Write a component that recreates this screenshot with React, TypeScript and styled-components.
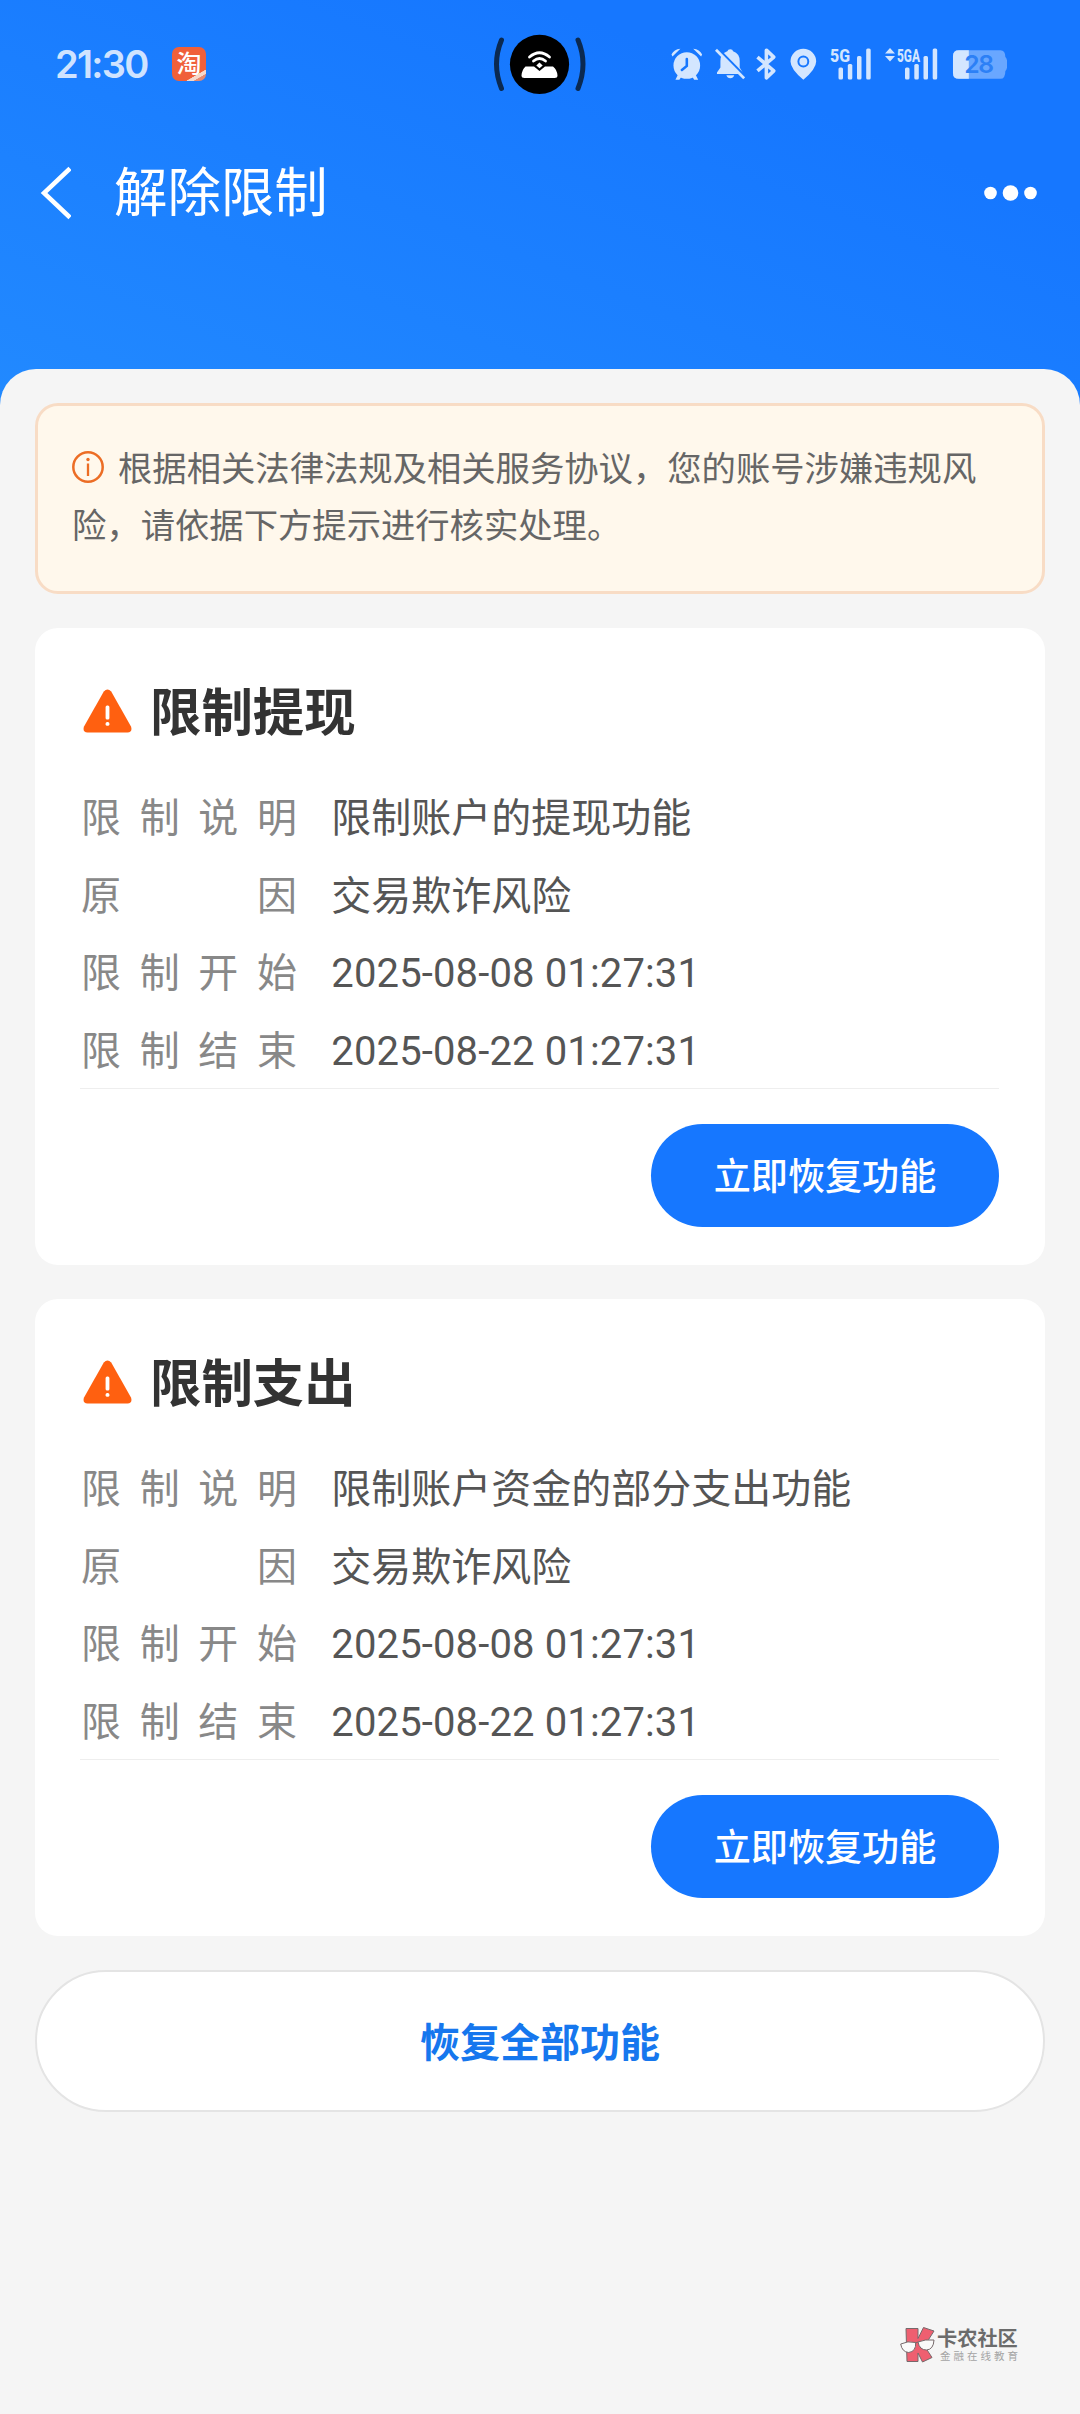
import React from "react";
import styled, { createGlobalStyle } from "styled-components";

const GlobalStyle = createGlobalStyle`
  * { box-sizing: border-box; }
  body { margin: 0; background: #f5f5f5; }
  button { font: inherit; cursor: pointer; }
`;

const Page = styled.div`
  width: 1080px;
  height: 2414px;
  display: flex;
  flex-direction: column;
  font-family: Roboto, "Noto Sans CJK SC", sans-serif;
  background: linear-gradient(to top right, #228aff, #1677ff 75%) 0 0 / 100% 420px no-repeat #f5f5f5;
`;

const StatusBar = styled.div`
  height: 128px;
  padding: 0 73px 0 55px;
  display: flex;
  align-items: center;
`;

const StatusLeft = styled.div`
  width: 438px;
  display: flex;
  align-items: center;
  gap: 24px;
`;

const Clock = styled.span`
  width: 93px;
  font: 600 38px/46px Inter, sans-serif;
  letter-spacing: -1.7px;
  white-space: nowrap;
  color: #cfe3ff;
`;

const AppBadge = styled.span`
  display: flex;
  align-items: center;
  justify-content: center;
  width: 34px;
  height: 34px;
  border-radius: 7px;
  padding-bottom: 4px;
  font: 500 25px/30px "Noto Sans CJK SC", sans-serif;
  color: #fff;
  background: linear-gradient(150deg, #f0603a 0 78%, #f5d9cc 79% 86%, #e58a72 87%);
`;

const StatusRight = styled.div`
  width: 336px;
  height: 32px;
  margin-left: auto;
  display: flex;
  color: #d3e6ff;
`;

const Signal = styled.div<{ $width: number; $left: number }>`
  width: ${(p) => p.$width}px;
  margin-left: ${(p) => p.$left}px;
  display: flex;
  svg { overflow: visible; }
`;

const NavBar = styled.header`
  height: 241px;
  padding: 24px 42px 0 40px;
  display: flex;
  align-items: flex-start;
`;

const Title = styled.h1`
  flex: 1;
  margin: 2px 0 0 43px;
  font-size: 53.4px;
  line-height: 80px;
  font-weight: 400;
  color: #fff;
`;

const Sheet = styled.main`
  flex: 1;
  padding: 34px 35px 0;
  border-radius: 36px 36px 0 0;
  background: #f5f5f5;
  display: flex;
  flex-direction: column;
`;

const Notice = styled.section`
  height: 191px;
  padding: 35px 32px 0 34px;
  border: 3px solid #f8dcc5;
  border-radius: 23px;
  background: #fff8ec;
  color: #666;
  font-size: 34.35px;
  line-height: 57.3px;
`;

const NoticeIcon = styled.svg`
  width: 32px;
  height: 32px;
  margin-right: 14px;
  vertical-align: -2px;
`;

const Card = styled.section`
  height: 637px;
  margin-top: 34px;
  padding: 51px 46px 0 45px;
  border-radius: 23px;
  background: #fff;
`;

const CardHead = styled.div`
  display: flex;
  align-items: center;
  height: 66px;
  gap: 18px;
  padding-left: 3px;
  > svg { margin-top: -2px; }
`;

const CardTitle = styled.h2`
  margin: 3px 0 0;
  font-size: 51.4px;
  line-height: 66px;
  font-weight: 700;
  color: #333;
`;

const Rows = styled.dl`
  margin: 35px 0 0;
  height: 309px;
  border-bottom: 1px solid #eee;
`;

const Row = styled.div`
  display: flex;
  height: 77.5px;
  gap: 34.3px;
  font-size: 40px;
  line-height: 77.5px;
`;

const Label = styled.dt`
  width: 217px;
  padding-left: 1px;
  color: #888;
  text-align: justify;
  text-align-last: justify;
`;

const Value = styled.dd<{ $numeric: boolean }>`
  margin: 0;
  color: #555;
  white-space: nowrap;
  letter-spacing: ${(p) => (p.$numeric ? "0.14px" : "0")};
`;

const CardFoot = styled.div`
  display: flex;
  justify-content: flex-end;
  padding-top: 35px;
`;

const RestoreButton = styled.button`
  width: 348px;
  height: 103px;
  padding: 0 0 4px;
  border: 0;
  border-radius: 52px;
  background: #1677ff;
  color: #fff;
  && { font-size: 37.1px; font-weight: 500; }
`;

const RestoreAll = styled.button`
  height: 142px;
  margin-top: 34px;
  padding: 0 0 3px;
  border: 2px solid #e4e4e4;
  border-radius: 71px;
  background: #fff;
  color: #1677ee;
  && { font-size: 40px; font-weight: 700; }
`;

const Watermark = styled.footer`
  margin: auto 24px 51px auto;
  display: flex;
  align-items: center;
  gap: 2px;
`;

const MarkText = styled.div`
  display: flex;
  flex-direction: column;
  font-family: "Noto Sans CJK SC", sans-serif;
`;

const MarkName = styled.span`
  font-size: 20.2px;
  line-height: 22px;
  font-weight: 700;
  color: #6b6b6b;
`;

const MarkSub = styled.span`
  padding-left: 3px;
  font-size: 10.5px;
  line-height: 14px;
  letter-spacing: 3px;
  color: #a4a4a4;
`;

const Camera = () => (
  <svg width="94" height="64" viewBox="0 0 94 64">
    <g fill="none" stroke="#0b2950" strokeWidth="5" strokeLinecap="round">
      <path d="M8.5 8Q-1.500 32 8.500 56.500" />
      <path d="M85 8Q95 32 85 56.500" />
    </g>
    <circle cx="46.500" cy="32.300" r="29.600" fill="#000" />
    <path d="M33 34.500h8l5.500 4.500 5.500-4.500h8q4 3 4.500 9 0 2.500-3 2.500h-30q-3 0-3-2.500 .5-6 4-9z" fill="#fff" />
    <path d="M46.500 30.500l3.200 3-3.200 2.800-3.200-2.800z" fill="#fff" />
    <g fill="none" stroke="#fff" strokeWidth="2.800" strokeLinecap="round">
      <path d="M36.500 25q10-8.500 20 0" />
      <path d="M40.500 29q6-5 12 0" />
    </g>
  </svg>
);

const AlarmIcon = () => (
  <svg width="32" height="32" viewBox="0 0 32 32" fill="currentColor">
    <circle cx="16" cy="17.500" r="13.500" />
    <path d="M0.500 6.500Q3 1 9.500 0.500L1.500 8.500zM31.500 6.500Q29 1 22.500 .5L30.500 8.500z" />
    <path d="M7 27l-2.500 5h4l2-3zM25 27l2.500 5h-4l-2-3z" />
    <path d="M16 11v7l-5 4" fill="none" stroke="#1677ff" strokeWidth="2.600" strokeLinecap="round" />
  </svg>
);

const BellIcon = styled.svg`
  margin-left: 12px;
`;

const BellOffIcon = () => (
  <BellIcon width="31" height="32" viewBox="0 0 31 32" fill="currentColor">
    <path d="M15.500 1q2.500 0 2.800 2.200Q25 5.500 25 13v6.500l3 5v1.500H2v-1.500l3.500-5V13q0-7.500 7-9.800Q13 1 15.500 1zM11.500 27.500h8q-1 3-4 3t-4-3z" />
    <path d="M2.500 .5L31 29.500" stroke="#1677ff" strokeWidth="3" />
    <path d="M1 1.500L29.500 30.500" stroke="currentColor" strokeWidth="2.800" />
  </BellIcon>
);

const BluetoothSvg = styled.svg`
  margin-left: 11px;
`;

const BluetoothIcon = () => (
  <BluetoothSvg width="21" height="32" viewBox="0 0 21 32" fill="none" stroke="currentColor" strokeWidth="3.600" strokeLinejoin="round">
    <path d="M1.500 9L18 23l-7.500 7V2L18 9 1.500 23" />
  </BluetoothSvg>
);

const PinSvg = styled.svg`
  margin-left: 13px;
`;

const PinIcon = () => (
  <PinSvg width="27" height="32" viewBox="0 0 27 32">
    <path fill="currentColor" fillRule="evenodd" d="M13.500 .5A13 13 0 0 1 26.500 13.500Q26.500 21 13.500 32 .5 21 .5 13.500A13 13 0 0 1 13.500 .5zM13.500 7.500a6 6 0 1 0 0 12 6 6 0 0 0 0-12z" />
    <circle cx="13.500" cy="13.500" r="4" fill="currentColor" />
  </PinSvg>
);

const SignalIcon = ({ label, bars, width, left, arrows }: { label: string; bars: number; width: number; left: number; arrows?: boolean }) => (
  <Signal $width={width} $left={left}>
    <svg width={width} height="32" viewBox={`0 0 ${width} 32`} fill="currentColor">
      {arrows && <path d="M5 0l5 5.500H0zM5 13.500l5-5.500H0z" />}
      <text x={arrows ? 12 : 0} y="13.500" fontFamily="Roboto, sans-serif" fontWeight="800" fontSize="18" textLength={arrows ? 23 : 20} lengthAdjust="spacingAndGlyphs">
        {label}
      </text>
      <rect x={bars} y="19.500" width="4.500" height="12" rx="1.500" />
      <rect x={bars + 9.3} y="16" width="4.500" height="15.500" rx="1.500" />
      <rect x={bars + 18.500} y="8" width="4.500" height="23.500" rx="1.500" />
      <rect x={bars + 27.700} y="0.500" width="4.500" height="31" rx="1.500" />
    </svg>
  </Signal>
);

const BatterySvg = styled.svg`
  margin-left: 14px;
`;

const BatteryIcon = () => (
  <BatterySvg width="56" height="32" viewBox="0 0 56 32">
    <path d="M7 2h42q5 0 5 7 2 1.500 2 7t-2 7q0 8-5 8H7q-6 0-6-6V8q0-6 6-6z" fill="#69a7ff" />
    <path d="M17 2v29H7q-6 0-6-6V8q0-6 6-6z" fill="#d3e6ff" />
    <text x="12.500" y="25.300" fontFamily="Inter, sans-serif" fontWeight="600" fontSize="25" textLength="30" fill="#2c80f6">28</text>
  </BatterySvg>
);

const WarnIcon = () => (
  <svg width="49" height="44" viewBox="0 0 49 44">
    <path d="M20.800 2.600Q24.500-1.500 28.200 2.600L48 37.500q1.800 5.500-3.500 6h-40Q-.8 43 1 37.500z" fill="#ff6010" />
    <rect x="22.600" y="16.500" width="3.800" height="14" rx="1.500" fill="#fff" />
    <rect x="22.600" y="33" width="3.800" height="3.800" rx="1.600" fill="#fff" />
  </svg>
);

const LogoMark = () => (
  <svg width="35" height="36" viewBox="0 0 35 36" stroke="#76696b" strokeWidth="1">
    <path d="M6 1.500h12v10l5.500-11L34 4 24.500 19 32 30.500 22.500 35 18 26v8.500H7z" fill="#ee5f70" />
    <path d="M.7 17q7-3.500 15-1.500 .5 9-7 10Q2 25 .7 17zM18 15q7-3 16-2-.5 9.500-7.500 10Q19.500 23 18 15z" fill="#fafafa" />
    <path d="M15.500 16l2.500-1" />
  </svg>
);

const restrictions = [
  { title: "限制提现", description: "限制账户的提现功能" },
  { title: "限制支出", description: "限制账户资金的部分支出功能" },
];

function RestrictionCard({ title, description }: { title: string; description: string }) {
  const rows = [
    { label: "限制说明", value: description, numeric: false },
    { label: "原因", value: "交易欺诈风险", numeric: false },
    { label: "限制开始", value: "2025-08-08 01:27:31", numeric: true },
    { label: "限制结束", value: "2025-08-22 01:27:31", numeric: true },
  ];
  return (
    <Card>
      <CardHead>
        <WarnIcon />
        <CardTitle>{title}</CardTitle>
      </CardHead>
      <Rows>
        {rows.map(({ label, value, numeric }) => (
          <Row key={label}>
            <Label>{label}</Label>
            <Value $numeric={numeric}>{value}</Value>
          </Row>
        ))}
      </Rows>
      <CardFoot>
        <RestoreButton>立即恢复功能</RestoreButton>
      </CardFoot>
    </Card>
  );
}

export default function App() {
  return (
    <Page>
      <GlobalStyle />
      <StatusBar>
        <StatusLeft>
          <Clock>21:30</Clock>
          <AppBadge>淘</AppBadge>
        </StatusLeft>
        <Camera />
        <StatusRight>
          <AlarmIcon />
          <BellOffIcon />
          <BluetoothIcon />
          <PinIcon />
          <SignalIcon label="5G" bars={8.5} width={42} left={13} />
          <SignalIcon label="5GA" bars={20} width={53} left={13} arrows />
          <BatteryIcon />
        </StatusRight>
      </StatusBar>
      <NavBar>
        <svg width="31" height="80" viewBox="0 0 31 80" fill="none" stroke="#fff" strokeWidth="4.500">
          <path d="M30 16.500L4 41l26 24.500" />
        </svg>
        <Title>解除限制</Title>
        <svg width="54" height="80" viewBox="0 0 54 80" fill="#fff">
          <circle cx="6.500" cy="41" r="6.300" />
          <circle cx="26.500" cy="41" r="7.800" />
          <circle cx="46.500" cy="41" r="6.300" />
        </svg>
      </NavBar>
      <Sheet>
        <Notice>
          <NoticeIcon viewBox="0 0 32 32">
            <circle cx="16" cy="16" r="14.700" fill="none" stroke="#ec6d25" strokeWidth="2.500" />
            <circle cx="16" cy="8.500" r="1.700" fill="#ec6d25" />
            <path d="M16 12.500v12.500" stroke="#ec6d25" strokeWidth="2.300" />
          </NoticeIcon>
          根据相关法律法规及相关服务协议，您的账号涉嫌违规风险，请依据下方提示进行核实处理。
        </Notice>
        {restrictions.map((item) => (
          <RestrictionCard key={item.title} {...item} />
        ))}
        <RestoreAll>恢复全部功能</RestoreAll>
        <Watermark>
          <LogoMark />
          <MarkText>
            <MarkName>卡农社区</MarkName>
            <MarkSub>金融在线教育</MarkSub>
          </MarkText>
        </Watermark>
      </Sheet>
    </Page>
  );
}
